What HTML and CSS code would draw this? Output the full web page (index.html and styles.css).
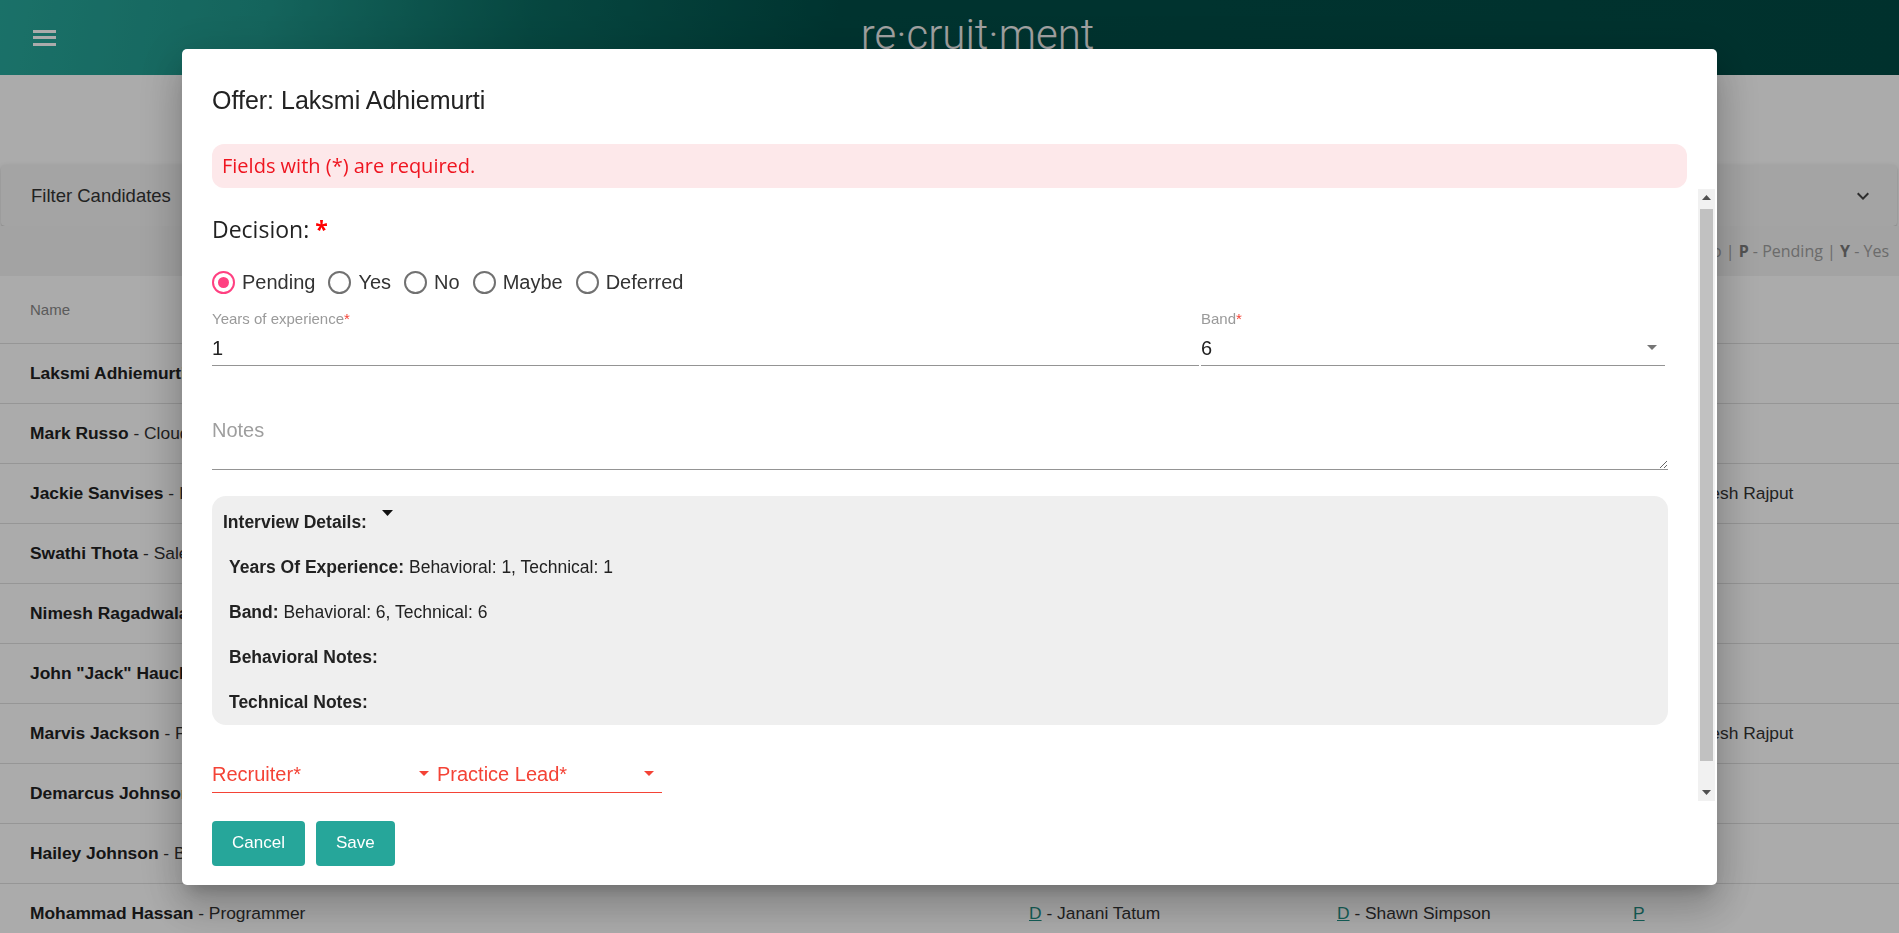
FILE: index.html
```html
<!DOCTYPE html>
<html lang="en">
<head>
<meta charset="utf-8">
<title>Recruitment</title>
<link rel="stylesheet" href="styles.css">
</head>
<body>
<header class="topbar">
  <div class="menu-btn" aria-label="Menu"><span></span><span></span><span></span></div>
  <div class="brand">re·cruit·ment</div>
</header>
<main class="page">
  <div class="filter-panel">
    <span>Filter Candidates</span>
    <svg class="chev" width="24" height="24" viewBox="0 0 24 24"><path d="M16.59 8.59L12 13.17 7.41 8.59 6 10l6 6 6-6z" fill="#444"/></svg>
  </div>
  <div class="legend"><b>D</b> - Declined | <b>M</b> - Maybe | <b>N</b> - No | <b>P</b> - Pending | <b>Y</b> - Yes</div>
  <div class="table">
    <div class="trow thead"><div>Name</div><div>Behavioral</div><div>Technical</div><div>Offer</div></div>
    <div class="trow"><div><b>Laksmi Adhiemurti</b> - Developer</div><div><a class="lnk">D</a> - Janani Tatum</div><div><a class="lnk">D</a> - Shawn Simpson</div><div><a class="lnk">P</a></div></div>
    <div class="trow"><div><b>Mark Russo</b> - Cloud Engineer</div><div><a class="lnk">D</a> - Janani Tatum</div><div></div><div></div></div>
    <div class="trow"><div><b>Jackie Sanvises</b> - IT Analyst</div><div><a class="lnk">D</a> - Janani Tatum</div><div><a class="lnk">D</a> - Shawn Simpson</div><div><a class="lnk">D</a> - Kamalesh Rajput</div></div>
    <div class="trow"><div><b>Swathi Thota</b> - Sales Manager</div><div></div><div></div><div></div></div>
    <div class="trow"><div><b>Nimesh Ragadwala</b> - QA Engineer</div><div><a class="lnk">D</a> - Janani Tatum</div><div></div><div></div></div>
    <div class="trow"><div><b>John "Jack" Hauck</b> - Architect</div><div></div><div><a class="lnk">D</a> - Shawn Simpson</div><div></div></div>
    <div class="trow"><div><b>Marvis Jackson</b> - Project Manager</div><div><a class="lnk">D</a> - Janani Tatum</div><div><a class="lnk">D</a> - Shawn Simpson</div><div><a class="lnk">D</a> - Kamalesh Rajput</div></div>
    <div class="trow"><div><b>Demarcus Johnson</b> - Designer</div><div></div><div></div><div></div></div>
    <div class="trow"><div><b>Hailey Johnson</b> - Business Analyst</div><div><a class="lnk">D</a> - Janani Tatum</div><div></div><div></div></div>
    <div class="trow"><div><b>Mohammad Hassan</b> - Programmer</div><div><a class="lnk">D</a> - Janani Tatum</div><div><a class="lnk">D</a> - Shawn Simpson</div><div><a class="lnk">P</a></div></div>
  </div>
</main>

<div class="backdrop">
  <div class="dialog">
    <h2 class="dialog-title">Offer: Laksmi Adhiemurti</h2>
    <div class="alert">Fields with (*) are required.</div>
    <div class="dialog-body">
      <div class="scroll-content">
        <h3 class="decision">Decision: <span class="req">*</span></h3>
        <div class="radios">
          <label class="radio"><span class="circle checked"></span>Pending</label>
          <label class="radio"><span class="circle"></span>Yes</label>
          <label class="radio"><span class="circle"></span>No</label>
          <label class="radio"><span class="circle"></span>Maybe</label>
          <label class="radio"><span class="circle"></span>Deferred</label>
        </div>
        <div class="fields">
          <div class="field">
            <div class="flabel">Years of experience<span class="star">*</span></div>
            <div class="fvalue">1</div>
          </div>
          <div class="field">
            <div class="flabel">Band<span class="star">*</span></div>
            <div class="fvalue select-val"><span>6</span><svg width="10" height="5" viewBox="0 0 10 5"><polygon points="0,0 10,0 5,5" fill="#757575"/></svg></div>
          </div>
        </div>
        <textarea class="notes" placeholder="Notes"></textarea>
        <div class="interview">
          <div class="int-head">Interview Details:<svg class="caret" width="11" height="6" viewBox="0 0 11 6"><polygon points="0,0 11,0 5.5,6" fill="#111"/></svg></div>
          <div class="int-line"><b>Years Of Experience:</b> Behavioral: 1, Technical: 1</div>
          <div class="int-line"><b>Band:</b> Behavioral: 6, Technical: 6</div>
          <div class="int-line"><b>Behavioral Notes:</b></div>
          <div class="int-line"><b>Technical Notes:</b></div>
        </div>
        <div class="selects">
          <div class="sel"><span>Recruiter*</span><svg width="10" height="5" viewBox="0 0 10 5"><polygon points="0,0 10,0 5,5" fill="#f44336"/></svg></div>
          <div class="sel"><span>Practice Lead*</span><svg width="10" height="5" viewBox="0 0 10 5"><polygon points="0,0 10,0 5,5" fill="#f44336"/></svg></div>
        </div>
      </div>
      <div class="scrollbar">
        <div class="sb-btn"><svg width="9" height="5" viewBox="0 0 9 5"><polygon points="0,5 9,5 4.5,0" fill="#505050"/></svg></div>
        <div class="sb-track"><div class="sb-thumb"></div></div>
        <div class="sb-btn"><svg width="9" height="5" viewBox="0 0 9 5"><polygon points="0,0 9,0 4.5,5" fill="#505050"/></svg></div>
      </div>
    </div>
    <div class="actions">
      <button class="btn">Cancel</button>
      <button class="btn">Save</button>
    </div>
  </div>
</div>
</body>
</html>
```

FILE: styles.css
```css
* { box-sizing: border-box; }

body {
  margin: 0;
  font-family: "Liberation Sans", Arial, sans-serif;
  background: #fff;
  color: rgba(0, 0, 0, 0.87);
  overflow: hidden;
}

/* ---------- background page ---------- */
.topbar {
  height: 75px;
  display: flex;
  align-items: center;
  padding-left: 33px;
  background: linear-gradient(100deg, #28a99c 0%, #1f968a 14%, #0a6a60 28%, #004d47 44%, #004a44 100%);
}

.menu-btn {
  width: 23px;
  display: flex;
  flex-direction: column;
  gap: 3.5px;
}

.menu-btn span {
  display: block;
  height: 3px;
  background: #fff;
}

.brand {
  flex: 1;
  align-self: flex-start;
  text-align: center;
  font-family: Roboto, sans-serif;
  font-weight: 300;
  font-size: 42px;
  line-height: 69px;
  color: #f0f0f0;
}

.page {
  padding-top: 90px;
}

.filter-panel {
  margin: 0 2px 0 1px;
  height: 61px;
  background: #f5f5f5;
  border-radius: 4px;
  box-shadow: 0 3px 1px -2px rgba(0,0,0,.2), 0 2px 2px 0 rgba(0,0,0,.14), 0 1px 5px 0 rgba(0,0,0,.12);
  display: flex;
  align-items: center;
  justify-content: space-between;
  padding: 0 22px 0 30px;
  font-size: 18.5px;
  color: #333;
}

.legend {
  height: 50px;
  line-height: 50px;
  text-align: right;
  padding-right: 10px;
  font-family: "Open Sans", sans-serif;
  font-size: 16px;
  color: #a0a0a0;
  background: #f3f3f3;
}

.legend b { color: #7a7a7a; }

.table { background: #fff; }

.trow {
  display: grid;
  grid-template-columns: 999px 308px 296px 1fr;
  align-items: center;
  padding-left: 30px;
  height: 60px;
  border-bottom: 1px solid #e0e0e0;
  font-size: 17.4px;
  color: #333;
  white-space: nowrap;
}

.trow b { color: #222; }

.trow.thead {
  height: 68px;
  font-size: 15px;
  color: #888;
}

.lnk {
  color: #1f8f84;
  text-decoration: underline;
}

/* ---------- dialog ---------- */
.backdrop {
  position: fixed;
  inset: 0;
  background: rgba(0, 0, 0, 0.33);
  display: flex;
  align-items: center;
  justify-content: center;
}

.dialog {
  width: 1535px;
  height: 836px;
  background: #fff;
  border-radius: 5px;
  box-shadow: 0 11px 15px -7px rgba(0,0,0,.2), 0 24px 38px 3px rgba(0,0,0,.14), 0 9px 46px 8px rgba(0,0,0,.12);
  display: flex;
  flex-direction: column;
}

.dialog-title {
  margin: 0;
  padding: 36px 30px 0;
  font-size: 25px;
  line-height: 30px;
  font-weight: 400;
  color: #222;
}

.alert {
  margin: 29px 30px 0;
  height: 44px;
  flex: none;
  background: #fde8ea;
  border-radius: 12px;
  color: #ef1520;
  font-family: "Open Sans", sans-serif;
  font-size: 20px;
  display: flex;
  align-items: center;
  padding-left: 10px;
}

.dialog-body {
  margin-top: 1px;
  height: 612px;
  flex: none;
  display: flex;
  padding-right: 2px;
}

.scroll-content {
  flex: 1;
  padding: 24px 30px 40px;
  overflow: hidden;
}

.decision {
  margin: 0;
  font-family: "Open Sans", sans-serif;
  font-size: 23px;
  font-weight: 500;
  line-height: 32px;
  color: #222;
}

.req {
  color: #f00;
  font-weight: 700;
}

.radios {
  margin-top: 26px;
  height: 24px;
  display: flex;
  align-items: center;
  gap: 13px;
}

.radio {
  display: flex;
  align-items: center;
  gap: 7px;
  font-size: 20px;
  color: #333;
}

.circle {
  width: 23px;
  height: 23px;
  border-radius: 50%;
  border: 2.6px solid #717171;
  display: flex;
  align-items: center;
  justify-content: center;
}

.circle.checked { border-color: #ff4081; }

.circle.checked::after {
  content: "";
  width: 11px;
  height: 11px;
  border-radius: 50%;
  background: #ff4081;
}

.fields {
  margin-top: 16px;
  display: grid;
  grid-template-columns: 987fr 464fr;
  column-gap: 2px;
  margin-right: 3px;
}

.flabel {
  font-size: 15px;
  line-height: 16px;
  color: #9a9a9a;
}

.star { color: #f44336; }

.fvalue {
  margin-top: 9px;
  font-size: 20px;
  line-height: 24px;
  padding-bottom: 5px;
  border-bottom: 1px solid #949494;
  color: #222;
}

.select-val {
  display: flex;
  align-items: center;
  justify-content: space-between;
}

.select-val svg { margin-right: 8px; }

.notes {
  display: block;
  margin-top: 40px;
  width: 100%;
  height: 64px;
  border: none;
  border-bottom: 1px solid #949494;
  padding: 12px 0 0;
  font-family: "Liberation Sans", Arial, sans-serif;
  font-size: 20px;
  line-height: 24px;
  outline: none;
  resize: vertical;
  color: #222;
}

.notes::placeholder { color: #9e9e9e; }

.interview {
  margin-top: 26px;
  height: 229px;
  background: #efefef;
  border-radius: 14px;
  padding: 16px 11px 0;
  display: flex;
  flex-direction: column;
  gap: 25px;
  font-size: 17.5px;
  line-height: 20px;
  color: #222;
}

.int-head {
  font-weight: 700;
  display: flex;
  align-items: flex-start;
}

.caret {
  margin-left: 15px;
  margin-top: -2px;
}

.int-line { padding-left: 6px; }

.selects {
  margin-top: 37px;
  width: 450px;
  display: flex;
  border-bottom: 1px solid #f44336;
}

.sel {
  width: 225px;
  display: flex;
  align-items: center;
  justify-content: space-between;
  padding-bottom: 6px;
  font-size: 20px;
  line-height: 24px;
  color: #f44336;
}

.sel svg { margin-right: 8px; }

.scrollbar {
  width: 17px;
  background: #f1f1f1;
  display: flex;
  flex-direction: column;
}

.sb-btn {
  height: 17px;
  display: flex;
  align-items: center;
  justify-content: center;
}

.sb-track {
  flex: 1;
  padding: 3px 2px 0;
}

.sb-thumb {
  height: 552px;
  background: #c1c1c1;
}

.actions {
  padding: 20px 30px 19px;
  display: flex;
  gap: 11px;
}

.btn {
  height: 45px;
  padding: 0 20px;
  border: none;
  border-radius: 4px;
  background: #26a69a;
  color: #fff;
  font-family: "Liberation Sans", Arial, sans-serif;
  font-size: 17px;
}
```
